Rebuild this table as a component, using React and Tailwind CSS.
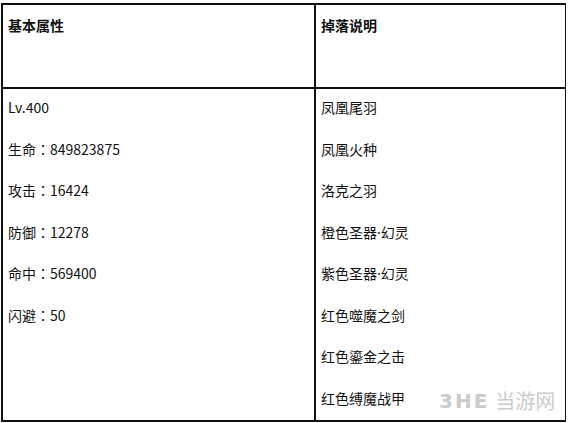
const stats = [
  ['Lv.400'],
  ['生命', '849823875'],
  ['攻击', '16424'],
  ['防御', '12278'],
  ['命中', '569400'],
  ['闪避', '50'],
];
const drops = ['凤凰尾羽', '凤凰火种', '洛克之羽', '橙色圣器·幻灵', '紫色圣器·幻灵', '红色噬魔之剑', '红色鎏金之击', '红色缚魔战甲'];

function Dotted({ text }) {
  const parts = text.split('·');
  if (parts.length === 1) return text;
  return (
    <>
      {parts[0]}
      <span style={{ fontFamily: '"Noto Sans", sans-serif' }}>·</span>
      {parts[1]}
    </>
  );
}

export default function App() {
  return (
    <div
      className="relative h-[423px] w-[570px] bg-white pl-[1px] pt-[3px] text-[14px] text-[#111]"
      style={{ fontFamily: '"Noto Sans CJK SC", "Noto Sans", sans-serif' }}
    >
      <div className="grid w-[565px] grid-cols-[313px_1fr] border-2 border-[#111] border-r-[1.5px]">
        <div className="h-[84px] border-r-2 border-b-2 border-[#111] px-[5px] pt-[10px] font-bold leading-[20px]">基本属性</div>
        <div className="h-[84px] border-b-2 border-[#111] px-[5px] pt-[10px] font-bold leading-[20px]">掉落说明</div>
        <div className="flex flex-col gap-[21.5px] border-r-2 border-[#111] px-[5px] pt-[8px] pb-[12px]">
          {stats.map(([k, v]) => (
            <div key={k} className="h-[20px] leading-[20px]">
              {k}
              {v && (
                <>
                  <span style={{ fontFamily: '"Noto Sans CJK TC", sans-serif' }}>：</span>
                  {v}
                </>
              )}
            </div>
          ))}
        </div>
        <div className="flex flex-col gap-[21.5px] px-[5px] pt-[8px] pb-[12px]">
          {drops.map((t) => (
            <div key={t} className="h-[20px] leading-[20px]">
              <Dotted text={t} />
            </div>
          ))}
        </div>
      </div>
      <div className="absolute left-[439px] top-[391px] flex items-center gap-[6px] text-[#cbcbcb]">
        <span className="text-[20px] font-bold leading-none tracking-[2px]" style={{ fontFamily: '"DejaVu Sans", sans-serif' }}>3HE</span>
        <span className="text-[20px] leading-none">当游网</span>
      </div>
    </div>
  );
}
